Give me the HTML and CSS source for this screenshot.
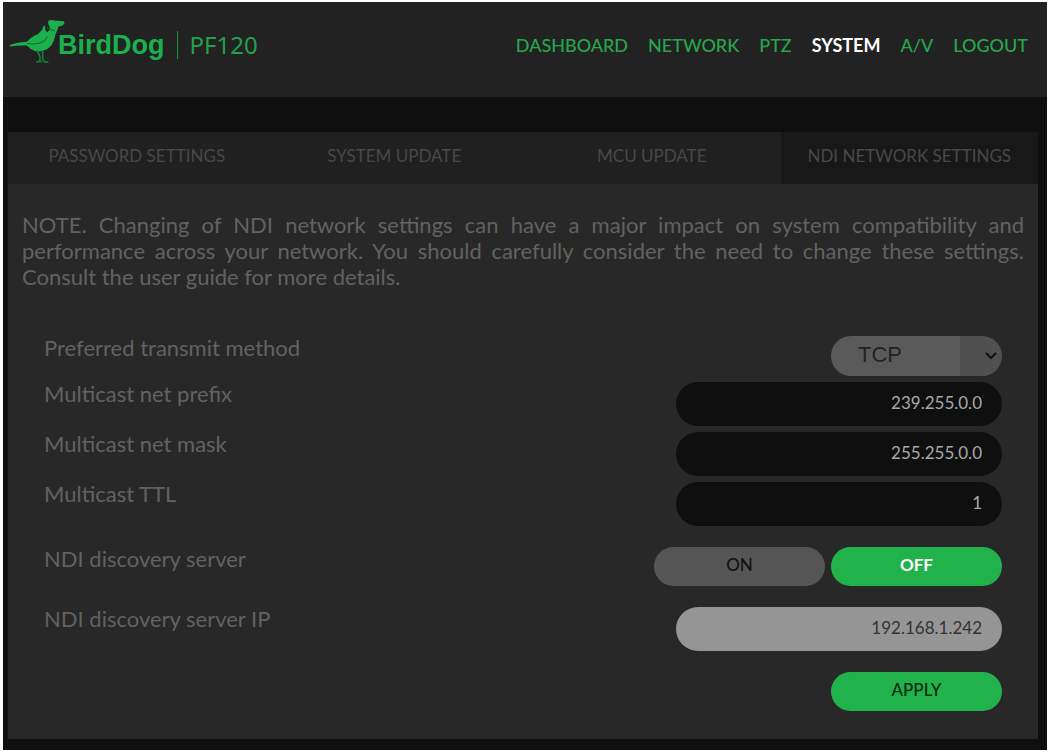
FILE: index.html
```
<!DOCTYPE html>
<html lang="en">
<head>
  <meta charset="UTF-8" />
  <meta name="viewport" content="width=device-width, initial-scale=1.0" />
  <title>BirdDog PF120</title>
  <link rel="stylesheet" href="styles.css">
</head>
<body>
  <header class="topbar">
    <div class="logo">
      <svg class="bird" viewBox="24 56 168 134" aria-hidden="true">
        <path d="M142 64 Q150 60 160 63 L188 65 Q192 67 190 72 Q187 78 178 80 L172 81 Q171 90 167 97 Q162 104 161 114 Q156 139 138 149 Q120 158 103 155 Q90 151 77 138 Q54 137 26 141 Q24 138 30 135 Q54 127 78 127 Q90 112 112 103 L124 90 L126 82 L131 78 L134 94 L139 98 Q149 91 146 82 Q139 73 142 64 Z" />
        <path d="M108 152 L117 172 L116 187 M106 187 L123 186 M125 152 L125 178 L130 187 L142 187" class="legs" />
        <path d="M78 132 Q98 136 116 131 Q134 126 140 111" class="wing" />
        <path d="M138 84 Q148 90 162 95" class="wing" />
      </svg>
      <span class="brand">BirdDog</span>
      <span class="model">PF120</span>
    </div>
    <nav class="main-nav">
      <a href="#">DASHBOARD</a>
      <a href="#">NETWORK</a>
      <a href="#">PTZ</a>
      <a href="#" class="active">SYSTEM</a>
      <a href="#">A/V</a>
      <a href="#">LOGOUT</a>
    </nav>
  </header>

  <main class="content">
    <div class="panel">
      <div class="tabs">
        <button type="button">PASSWORD SETTINGS</button>
        <button type="button">SYSTEM UPDATE</button>
        <button type="button">MCU UPDATE</button>
        <button type="button" class="selected">NDI NETWORK SETTINGS</button>
      </div>

      <p class="note">NOTE. Changing of NDI network settings can have a major impact on system compatibility and performance across your network. You should carefully consider the need to change these settings. Consult the user guide for more details.</p>

      <form class="settings">
        <div class="row">
          <label for="method">Preferred transmit method</label>
          <div class="select-wrap">
            <select id="method">
              <option>TCP</option>
              <option>UDP</option>
              <option>Multicast</option>
            </select>
            <svg class="arrow" viewBox="0 0 12 8" aria-hidden="true"><path d="M1 1 L6 6 L11 1" /></svg>
          </div>
        </div>
        <div class="row">
          <label for="prefix">Multicast net prefix</label>
          <input type="text" id="prefix" value="239.255.0.0">
        </div>
        <div class="row">
          <label for="mask">Multicast net mask</label>
          <input type="text" id="mask" value="255.255.0.0">
        </div>
        <div class="row">
          <label for="ttl">Multicast TTL</label>
          <input type="text" id="ttl" value="1">
        </div>
        <div class="row spaced">
          <span class="label" id="discovery">NDI discovery server</span>
          <div class="toggle" role="group" aria-labelledby="discovery">
            <button type="button" class="btn">ON</button>
            <button type="button" class="btn on">OFF</button>
          </div>
        </div>
        <div class="row spaced">
          <label for="server-ip">NDI discovery server IP</label>
          <input type="text" id="server-ip" class="light" value="192.168.1.242" readonly>
        </div>
        <div class="row spaced actions">
          <button type="button" class="btn apply">APPLY</button>
        </div>
      </form>
    </div>
  </main>
</body>
</html>
```
FILE: styles.css
```
* {
  margin: 0;
  padding: 0;
  box-sizing: border-box;
}

body {
  background: white;
  padding: 2px 3px 3px;
  font-family: Lato, "Liberation Sans", sans-serif;
}

/* Header */
.topbar {
  display: flex;
  justify-content: space-between;
  align-items: flex-start;
  height: 95px;
  padding: 16px 19px 0 6px;
  background: #222222;
}

.logo {
  display: flex;
  align-items: center;
  color: #1bb04c;
}

.bird {
  width: 56px;
  height: 45px;
  margin-right: -7px;
  fill: #1bb04c;
}

.bird .legs {
  fill: none;
  stroke: #1a7a3b;
  stroke-width: 5;
}

.bird .wing {
  fill: none;
  stroke: #17602f;
  stroke-width: 3;
}

.brand {
  font: bold 27px/30px "Liberation Sans", sans-serif;
  margin-top: 8px;
}

.model {
  font: 24px/28px "Noto Sans", sans-serif;
  margin-top: 8px;
  margin-left: 13px;
  padding-left: 11px;
  border-left: 1px solid #1a8f42;
  color: #22a04a;
}

.main-nav {
  display: flex;
  gap: 20px;
  margin-top: 15px;
}

.main-nav a {
  color: #27a74c;
  font-size: 18px;
  line-height: 24px;
  font-weight: 500;
  text-decoration: none;
}

.main-nav a.active {
  color: white;
  font-weight: bold;
}

/* Settings panel */
.content {
  background: #0f0f0f;
  padding: 35px 9px 11px 5px;
}

.panel {
  background: #282828;
  padding-bottom: 28px;
}

.tabs {
  display: grid;
  grid-template-columns: repeat(4, 1fr);
  background: #202020;
}

.tabs button {
  height: 52px;
  padding-bottom: 4px;
  border: none;
  background: none;
  color: #484848;
  font: 17px/24px Lato, sans-serif;
  cursor: pointer;
}

.tabs .selected {
  background: #181818;
}

.note {
  padding: 28px 14px 46px;
  color: #626262;
  font-size: 22px;
  line-height: 26px;
  text-align: justify;
}

.settings {
  padding: 0 36px;
}

.row {
  display: flex;
  justify-content: space-between;
  align-items: flex-start;
  margin-bottom: 6px;
}

.row.spaced {
  margin-top: 21px;
  margin-bottom: 0;
}

.row.actions {
  justify-content: flex-end;
}

.row label,
.label {
  color: #626262;
  font-size: 22px;
  line-height: 24px;
}

.row input {
  width: 326px;
  height: 44px;
  padding: 0 20px 4px;
  border: none;
  border-radius: 22px;
  background: #0f0f0f;
  color: #a8a8a8;
  font: 17px/24px Lato, sans-serif;
  text-align: right;
}

.row input.light {
  background: #959595;
  color: #333333;
}

.select-wrap {
  position: relative;
}

.select-wrap select {
  display: block;
  appearance: none;
  width: 171px;
  height: 40px;
  padding: 0 40px 2px 27px;
  border: none;
  border-radius: 20px;
  background: linear-gradient(to right, #5a5a5a 129px, #505050 129px);
  color: #222222;
  font: 22px/26px "Liberation Sans", sans-serif;
}

.arrow {
  position: absolute;
  right: 5px;
  top: 16px;
  width: 12px;
  height: 8px;
  fill: none;
  stroke: #111111;
  stroke-width: 2;
  pointer-events: none;
}

.toggle {
  display: flex;
  gap: 6px;
}

.btn {
  width: 171px;
  height: 39px;
  padding-bottom: 3px;
  border: none;
  border-radius: 20px;
  background: #555555;
  color: #111111;
  font: 500 17px/24px Lato, sans-serif;
  cursor: pointer;
}

.btn.on {
  background: #22b24c;
  color: white;
  font-weight: bold;
}

.btn.apply {
  background: #22b24c;
  color: #0b2a13;
}
```
